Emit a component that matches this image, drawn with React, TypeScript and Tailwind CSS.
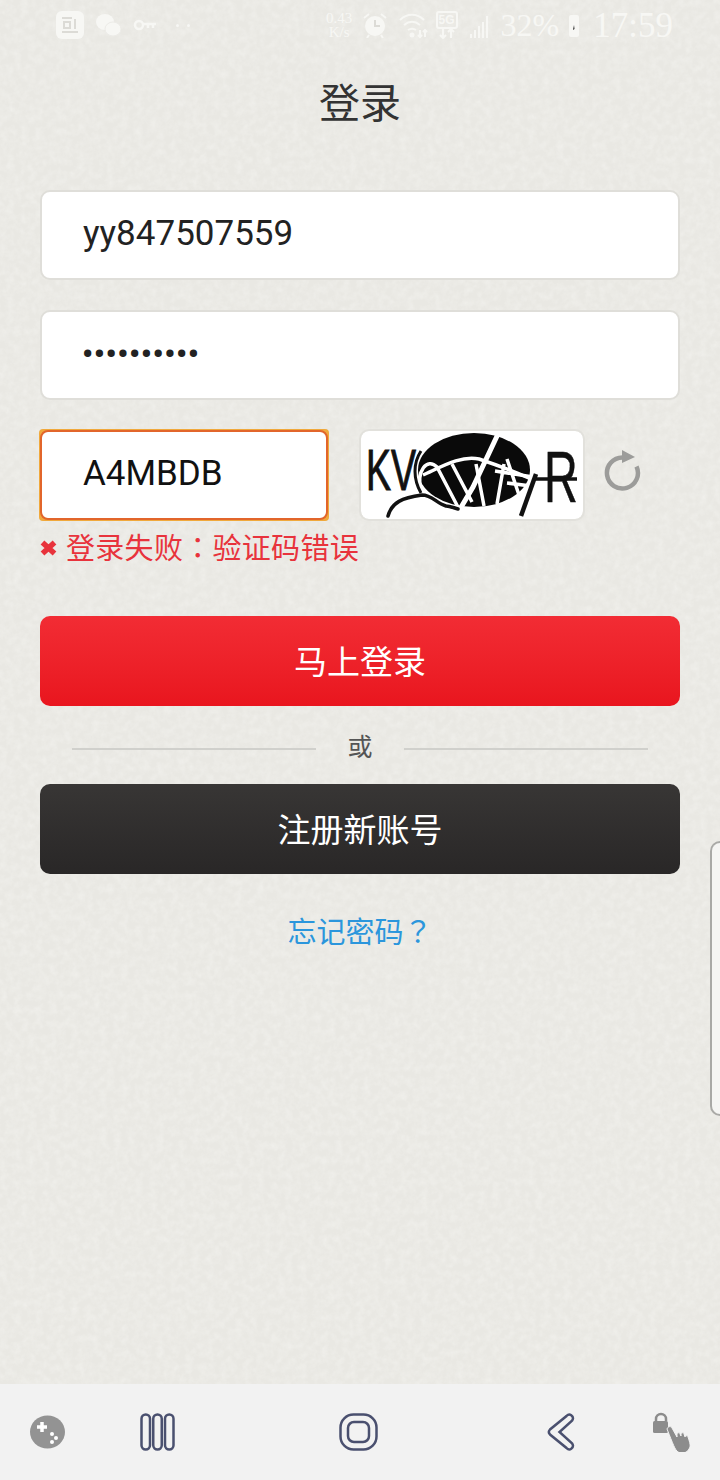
const cjk = "font-['Noto_Sans_CJK_SC','Noto_Sans',sans-serif]";
const tc = "font-['Noto_Sans_CJK_TC',sans-serif]";

function Texture() {
  return (
    <svg className="absolute inset-0 h-full w-full" aria-hidden="true">
      <filter id="paper">
        <feTurbulence type="fractalNoise" baseFrequency="0.14" numOctaves="3" seed="4" />
        <feColorMatrix values="0 0 0 0 1  0 0 0 0 1  0 0 0 0 0.98  1.6 0 0 0 -0.55" />
      </filter>
      <rect width="100%" height="100%" filter="url(#paper)" opacity="0.32" />
    </svg>
  );
}

function StatusBar() {
  return (
    <div className="relative flex h-[50px] items-center pl-[56px] pr-[47px] text-[#f7f7f4] font-['Liberation_Serif',serif]">
      {/* left side icons */}
      <svg width="28" height="28" viewBox="0 0 28 28" className="mr-[11px]">
        <rect width="28" height="28" rx="6" fill="#f7f7f4" />
        <path d="M6 7h10M8 11h6v6H8zM19 8v10M6 21h16" stroke="#dcdbd6" strokeWidth="2" fill="none" />
      </svg>
      <svg width="26" height="24" viewBox="0 0 26 24" className="mr-[12px]">
        <ellipse cx="10" cy="9" rx="9" ry="8" fill="#f7f7f4" />
        <ellipse cx="18" cy="16" rx="8" ry="7" fill="#f7f7f4" stroke="#ecebe7" strokeWidth="1" />
      </svg>
      <svg width="24" height="12" viewBox="0 0 24 12" className="mr-[19px]" fill="none" stroke="#f7f7f4" strokeWidth="2.5">
        <circle cx="6" cy="6" r="4" />
        <path d="M10 5h13M15 5v4M20 5v4" />
      </svg>
      <div className="flex gap-[8px]">
        <span className="h-[3px] w-[3px] rounded-full bg-[#f7f7f4]" />
        <span className="h-[3px] w-[3px] rounded-full bg-[#f7f7f4]" />
      </div>

      {/* right side */}
      <div className="ml-auto flex items-center">
        <div className="mr-[10px] flex w-[27px] flex-col items-center text-[15px] leading-[14px]">
          <span>0.43</span>
          <span>K/s</span>
        </div>
        <svg width="24" height="26" viewBox="0 0 24 26" className="mr-[12px]">
          <circle cx="12" cy="14" r="10" fill="#f7f7f4" />
          <path d="M12 8v6h5" stroke="#dcdbd6" strokeWidth="2" fill="none" />
          <path d="M1 6l5-4M23 6l-5-4M6 23l-2 3M18 23l2 3" stroke="#f7f7f4" strokeWidth="2" />
        </svg>
        <svg width="30" height="28" viewBox="0 0 30 28" className="mr-[7px]" fill="none" stroke="#f7f7f4" strokeWidth="2">
          <path d="M1 9c7-7 17-7 24 0M5 14c5-4 11-4 16 0M9 19c3-2 5-2 8 0" />
          <circle cx="13" cy="24" r="1.5" fill="#f7f7f4" />
          <path d="M21 19v7M19 24l2 2 2-2M26 26v-7M24 21l2-2 2 2" />
        </svg>
        <div className="mr-[11px] flex w-[22px] flex-col items-center">
          <span className="h-[18px] w-[22px] rounded-[3px] border-2 border-[#f7f7f4] text-center font-['Liberation_Sans',sans-serif] text-[12px] font-bold leading-[14px]">5G</span>
          <svg width="18" height="10" viewBox="0 0 18 10" fill="none" stroke="#f7f7f4" strokeWidth="2">
            <path d="M5 0v9M2 6l3 3 3-3M13 9V0M10 3l3-3 3 3" />
          </svg>
        </div>
        <svg width="20" height="22" viewBox="0 0 20 22" className="mr-[12px] mt-[4px]" stroke="#f7f7f4" strokeWidth="2">
          <path d="M2 22v-4M6 22v-8M10 22v-12M14 22v-16M18 22V0" />
        </svg>
        <span className="text-[32px] leading-none">32%</span>
        <svg width="10" height="26" viewBox="0 0 10 26" className="ml-[10px] mr-[14px]">
          <rect y="3" width="10" height="22" rx="2" fill="#f7f7f4" />
          <path d="M5 13l-1 5 1.500-1z" fill="#222" />
        </svg>
        <span className="text-[35px] leading-none">17:59</span>
      </div>
    </div>
  );
}

function Captcha() {
  return (
    <svg width="222" height="88" viewBox="0 0 222 88" className="rounded-[8px] bg-white outline-2 outline-[#e2e1dc]">
      <ellipse cx="113" cy="39" rx="56" ry="37" fill="#0a0a0a" />
      <text x="5" y="59" fontFamily="Liberation Sans" fontSize="58" fill="#111" stroke="#111" strokeWidth="1" textLength="50" lengthAdjust="spacingAndGlyphs">
        KV
      </text>
      <text transform="translate(183 71) scale(0.65 1)" fontFamily="Liberation Sans" fontSize="72" fill="#111" stroke="#111" strokeWidth="0.500">
        R
      </text>
      <g fill="none" stroke="#fff" strokeWidth="3.500">
        <path d="M137 3L112 56 99 78" strokeWidth="5" />
        <path d="M60 60C55 40 66 26 76 36L98 78" />
        <path d="M62 44C80 36 100 24 118 28 136 34 152 40 170 48" />
        <path d="M91 33l20 38M115 33l8 42M143 33l-7 40M146 28l12 36M134 40l38 6M146 52l24 3" />
      </g>
      <g fill="none" stroke="#111" strokeWidth="3.500">
        <path d="M27 85c4-14 14-18 34-21 10 0 14 8 24 11 4 0 8 2 12 3" strokeLinecap="round" />
        <path d="M60 20c-8 12-8 28 0 42" strokeWidth="3" />
        <path d="M172 48h44" />
        <path d="M175 43l-15 42" strokeWidth="4.500" />
      </g>
    </svg>
  );
}

function BottomNav() {
  return (
    <div className="relative mt-auto flex h-[96px] items-center bg-[#f2f2f2] pl-[30px] pr-[27px]">
      <svg width="35" height="34" viewBox="0 0 35 34" className="mr-[75px]">
        <ellipse cx="17.500" cy="17" rx="17.500" ry="16.500" fill="#939393" />
        <path d="M12 7v10M7 12h10" stroke="#fff" strokeWidth="3.500" />
        <circle cx="22" cy="19" r="2" fill="#fff" />
        <circle cx="26" cy="23" r="2" fill="#fff" />
        <circle cx="22" cy="27" r="2" fill="#fff" />
      </svg>
      <svg width="35" height="38" viewBox="0 0 35 38" className="mr-[164px]" fill="none" stroke="#4a506f" strokeWidth="2.500">
        <rect x="1.500" y="1.500" width="8.500" height="35" rx="4.250" />
        <rect x="13.250" y="1.500" width="8.500" height="35" rx="4.250" />
        <rect x="25" y="1.500" width="8.500" height="35" rx="4.250" />
      </svg>
      <svg width="39" height="38" viewBox="0 0 39 38" className="mr-[169px]" fill="none" stroke="#4a506f" strokeWidth="2.500">
        <rect x="1.500" y="1.500" width="36" height="35" rx="13" />
        <rect x="9" y="9" width="21" height="20" rx="6" />
      </svg>
      <svg width="28" height="38" viewBox="0 0 28 38" className="mr-[78px]" fill="none" stroke="#4a506f" strokeWidth="2.500">
        <path d="M21 1.800c2-1 5 1 5 3.500 0 1-.5 1.700-1 2.400L12.500 19 25 30.300c.5.700 1 1.400 1 2.400 0 2.500-3 4.500-5 3.500-.6-.3-1-.6-1.500-1.200L3 21.500c-1.300-1.400-1.300-3.600 0-5L19.500 3c.5-.6.900-.9 1.500-1.200z" />
      </svg>
      <svg width="40" height="40" viewBox="0 0 40 40">
        <path d="M3 9V7a5 5 0 0 1 10 0v2" fill="none" stroke="#8c8c8c" strokeWidth="2.500" />
        <rect x="0" y="9" width="15" height="12" rx="1.500" fill="#8c8c8c" />
        <path d="M14 17c1-3 4-3 5-1l5 9v-3c1-2 3-1 3 0l1 2v-2c1-2 3-1 3 0l1 3c1-2 3-1 3 0 2 6 3 9 1 12-2 4-7 5-11 3-3-2-5-8-11-23z" fill="#8c8c8c" stroke="#f2f2f2" strokeWidth="1" />
      </svg>
    </div>
  );
}

export default function App() {
  return (
    <div className={`relative flex h-[1480px] w-[720px] flex-col overflow-hidden bg-[#e9e8e3] ${cjk}`}>
      <Texture />
      <div className="relative flex flex-1 flex-col">
        <StatusBar />

        <h1 className="mt-[23px] text-center text-[41px] leading-[54px] font-normal text-[#333]">登录</h1>

        <div className="mt-[63px] flex flex-col px-[40px]">
          <div className="flex h-[90px] items-center rounded-[10px] border-2 border-[#dfded9] bg-white pb-[2px] pl-[41px] font-['Roboto',sans-serif] text-[35px] text-[#222]">
            yy847507559
          </div>
          <div className="mt-[30px] flex h-[90px] items-center rounded-[10px] border-2 border-[#dfded9] bg-white pb-[2px] pl-[40px] font-['Roboto',sans-serif] text-[31px] font-bold leading-none tracking-[0.600px] text-[#222]">
            ••••••••••
          </div>

          <div className="mt-[29px] flex items-start">
            <div className="-ml-px flex h-[92px] w-[290px] items-center rounded-[4px] bg-[#f0a93c] p-px">
              <div className="flex h-full w-full items-center rounded-[8px] border-2 border-[#e2652b] bg-white pb-[2px] pl-[41px] font-['Roboto',sans-serif] text-[35px] text-[#111]">
                A4MBDB
              </div>
            </div>
            <div className="ml-[32px] mt-[2px] flex">
              <Captcha />
            </div>
            <svg width="40" height="44" viewBox="0 0 40 44" className="ml-[19px] mt-[18px]" fill="none">
              <path d="M20.500 10.500A15.500 15.500 0 1 0 34.500 19.500" stroke="#9c9c9a" strokeWidth="4.500" />
              <path d="M20 3l13 7-13 6z" fill="#9c9c9a" />
            </svg>
          </div>

          <div className="mt-[5px] flex h-[40px] items-center text-[29px] leading-none tracking-[0.300px] text-[#e8333c]">
            <svg width="17" height="16" viewBox="0 0 17 16" className="mr-[9px] mt-[3px]">
              <path d="M2.500 2.500l12 11M14.500 2.500l-12 11" stroke="#e8333c" strokeWidth="5.500" />
            </svg>
            登录失败<span className={tc}>：</span>验证码错误
          </div>

          <button className="mt-[50px] flex h-[90px] items-center justify-center rounded-[10px] bg-gradient-to-b from-[#f22c34] to-[#e9151e] text-[33px] text-white">
            马上登录
          </button>

          <div className="mt-[23px] flex h-[36px] items-center px-[32px]">
            <div className="mt-[3px] h-[2px] flex-1 bg-[#d0d0cc]" />
            <span className="mb-[4px] w-[88px] text-center text-[25px] leading-none text-[#555]">或</span>
            <div className="mt-[3px] h-[2px] flex-1 bg-[#d0d0cc]" />
          </div>

          <button className="mt-[19px] flex h-[90px] items-center justify-center rounded-[10px] bg-gradient-to-b from-[#383635] to-[#292727] text-[33px] text-white">
            注册新账号
          </button>

          <a className="mt-[36px] text-center text-[29px] leading-[40px] text-[#2b96dc]">
            忘记密码<span className={tc}>？</span>
          </a>
        </div>

        <BottomNav />
      </div>

      {/* edge panel handle */}
      <div className="absolute right-0 top-[841px] h-[275px] w-[10px] rounded-l-[10px] border-y-2 border-l-2 border-[#a9a9a6] bg-[#f5f5f3]" />
    </div>
  );
}
